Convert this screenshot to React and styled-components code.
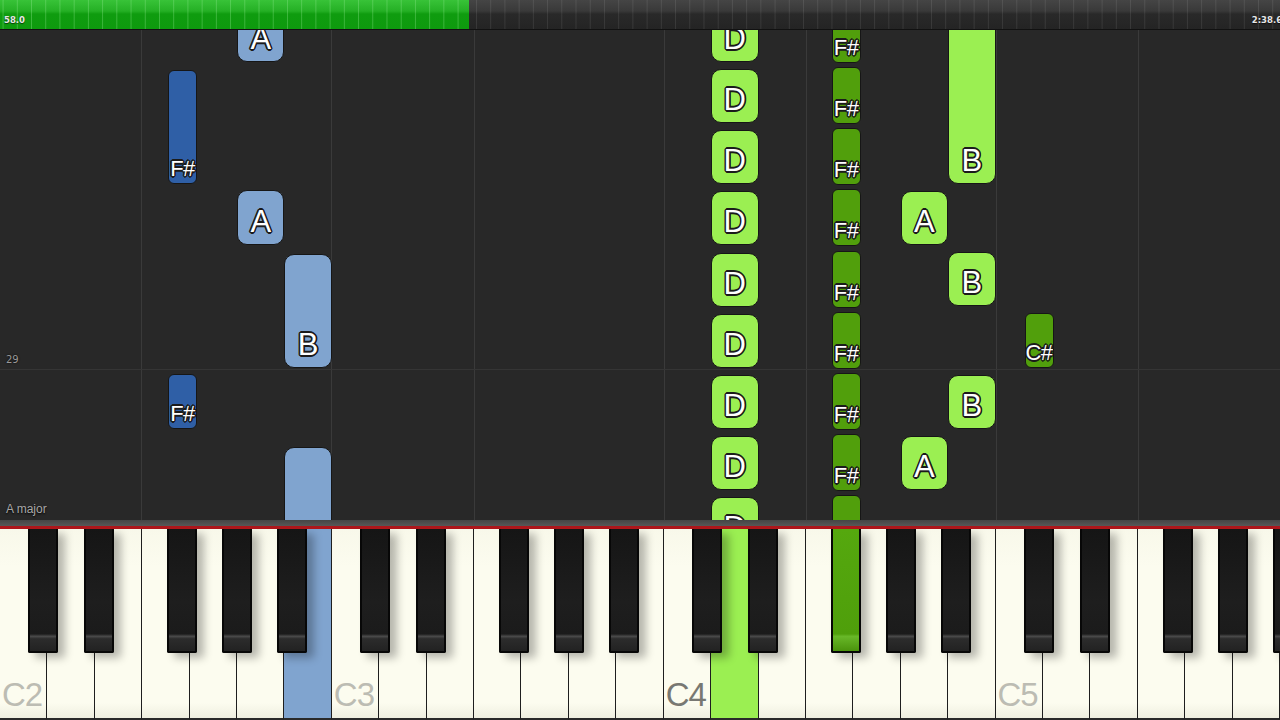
import React from 'react';
import styled, { createGlobalStyle } from 'styled-components';

const WHITE_W = 1280 / 27;
const OCTAVE_W = WHITE_W * 7;
const ROLL_TOP = 30;

const colors = {
  rollBg: '#282828',
  grid: '#3a3a3a',
  lightBlue: '#80a4cf',
  darkBlue: '#2f5fa6',
  lightGreen: '#9bef52',
  darkGreen: '#519f0c',
  ivory: '#fcfcef',
};

// offsets of the black keys inside one octave, measured from the C
const BLACK_OFFSETS = { 'C#': 28, 'D#': 84, 'F#': 167, 'G#': 222, 'A#': 277 };

const whiteLane = (idx) => ({ left: idx * WHITE_W, width: WHITE_W });
const blackLane = (octave, name) => ({ left: octave * OCTAVE_W + BLACK_OFFSETS[name] + 1, width: 29 });

const notes = [
  { lane: whiteLane(5), top: 8, bottom: 62, label: 'A', color: colors.lightBlue },
  { lane: whiteLane(5), top: 190, bottom: 245, label: 'A', color: colors.lightBlue },
  { lane: whiteLane(6), top: 254, bottom: 368, label: 'B', color: colors.lightBlue },
  { lane: whiteLane(6), top: 447, bottom: 760, label: '', color: colors.lightBlue },
  { lane: blackLane(0, 'F#'), top: 70, bottom: 184, label: 'F#', color: colors.darkBlue, small: true },
  { lane: blackLane(0, 'F#'), top: 374, bottom: 429, label: 'F#', color: colors.darkBlue, small: true },
  { lane: whiteLane(20), top: -40, bottom: 184, label: 'B', color: colors.lightGreen },
  { lane: whiteLane(20), top: 252, bottom: 306, label: 'B', color: colors.lightGreen },
  { lane: whiteLane(20), top: 375, bottom: 429, label: 'B', color: colors.lightGreen },
  { lane: whiteLane(19), top: 191, bottom: 245, label: 'A', color: colors.lightGreen },
  { lane: whiteLane(19), top: 436, bottom: 490, label: 'A', color: colors.lightGreen },
  { lane: blackLane(3, 'C#'), top: 313, bottom: 368, label: 'C#', color: colors.darkGreen, small: true },
];

for (let k = -1; k <= 7; k += 1) {
  const d = 69 + k * 61.2;
  notes.push({ lane: whiteLane(15), top: d, bottom: d + 54, label: 'D', color: colors.lightGreen });
  const f = 67 + k * 61.2;
  notes.push({ lane: blackLane(2, 'F#'), top: f, bottom: f + 57, label: 'F#', color: colors.darkGreen, small: true });
}

const gridColumns = [141, 331, 474, 664, 806, 996, 1138];

const whiteKeys = Array.from({ length: 27 }, (_, i) => {
  const octave = Math.floor(i / 7);
  return {
    label: i % 7 === 0 ? `C${octave + 2}` : null,
    strong: octave === 2,
    highlight: i === 6 ? colors.lightBlue : i === 15 ? colors.lightGreen : null,
  };
});

const blackKeys = [];
for (let o = 0; o < 4; o += 1) {
  Object.keys(BLACK_OFFSETS).forEach((name) => {
    blackKeys.push({
      left: o * OCTAVE_W + BLACK_OFFSETS[name],
      highlight: o === 2 && name === 'F#',
    });
  });
}

const GlobalStyle = createGlobalStyle`
  html, body {
    margin: 0;
    padding: 0;
    background: #1a1a1a;
  }
  body {
    font-family: "Liberation Sans", Arial, sans-serif;
    overflow: hidden;
  }
`;

const Screen = styled.div`
  width: 1280px;
  height: 720px;
  display: flex;
  flex-direction: column;
  overflow: hidden;
  background: ${colors.rollBg};
`;

const TopBar = styled.div`
  height: 29px;
  display: flex;
  border-bottom: 1px solid #111;
  flex-shrink: 0;
`;

const Ticks = styled.div`
  display: flex;
  align-items: flex-end;
  padding: 0 4px 4px;
  box-sizing: border-box;
  overflow: hidden;
  white-space: nowrap;
  font-family: "DejaVu Sans", sans-serif;
  font-size: 8.5px;
  font-weight: bold;
  color: #e6e6e6;
  text-shadow: 0 1px 1px rgba(0, 0, 0, 0.6);
  background-image:
    linear-gradient(90deg, ${({ tick }) => tick} 0 1px, transparent 1px 100%),
    ${({ fill }) => fill};
  background-size: 14.22px 100%, 100% 100%;
  background-repeat: repeat-x, no-repeat;
  background-position: 2.6px 0, 0 0;
`;

const Played = styled(Ticks)`
  width: 469px;
`;

const Remaining = styled(Ticks)`
  flex: 1;
  justify-content: flex-end;
  padding-right: 0;
  margin-right: -8px;
  background-position: 7px 0, 0 0;
`;

const Roll = styled.div`
  position: relative;
  height: 490px;
  flex-shrink: 0;
  overflow: hidden;
  background: ${colors.rollBg};
`;

const GridColumn = styled.div`
  position: absolute;
  top: 0;
  bottom: 0;
  width: 1px;
  background: ${colors.grid};
`;

const GridRow = styled.div`
  position: absolute;
  left: 0;
  right: 0;
  height: 1px;
  background: #353535;
`;

const MeasureNumber = styled.div`
  position: absolute;
  left: 6px;
  font-family: "DejaVu Sans", sans-serif;
  font-size: 10px;
  color: #9a9a9a;
  text-shadow: 0 0 2px #000;
`;

const KeyName = styled.div`
  position: absolute;
  left: 6px;
  bottom: 4px;
  font-size: 12px;
  color: #a8a8a8;
  text-shadow: 0 1px 2px #000;
`;

const outline = '#1b1b1b';

const Note = styled.div`
  position: absolute;
  box-sizing: border-box;
  display: flex;
  flex-direction: column;
  justify-content: flex-end;
  align-items: center;
  background: ${({ color }) => color};
  border: 1.5px solid #161616;
  border-radius: ${({ small }) => (small ? '6px' : '10px')};
  padding-bottom: ${({ small }) => (small ? '3px' : '7px')};
  font-size: ${({ small }) => (small ? '22px' : '31px')};
  letter-spacing: ${({ small }) => (small ? '-0.5px' : '0')};
  line-height: 1;
  color: #fff;
  text-shadow:
    -1.2px -1.2px 0 ${outline}, 1.2px -1.2px 0 ${outline}, -1.2px 1.2px 0 ${outline}, 1.2px 1.2px 0 ${outline},
    0 -1.6px 0 ${outline}, 0 1.6px 0 ${outline}, -1.6px 0 0 ${outline}, 1.6px 0 0 ${outline};
  overflow: hidden;
`;

const Divider = styled.div`
  height: 6px;
  flex-shrink: 0;
  background: linear-gradient(#454545, #575757);
  border-bottom: 3px solid #ad161b;
`;

const Keyboard = styled.div`
  position: relative;
  flex: 1;
  display: flex;
  overflow: hidden;
  background: #1a1a1a;
`;

const WhiteKey = styled.div`
  flex: 0 0 ${WHITE_W}px;
  box-sizing: border-box;
  display: flex;
  align-items: flex-end;
  padding: 0 0 7px 2px;
  border-right: 1.5px solid #1e1e1e;
  border-bottom: 2px solid #2a2a2a;
  background: ${({ highlight }) =>
    highlight || `linear-gradient(180deg, #f8f8ea 0%, ${colors.ivory} 20%, ${colors.ivory} 92%, #efefe0 100%)`};
`;

const KeyLabel = styled.span`
  font-size: 33px;
  line-height: 1;
  letter-spacing: -1px;
  color: ${({ strong }) => (strong ? '#787872' : '#bcbcb3')};
`;

const BlackKey = styled.div`
  position: absolute;
  top: 0;
  width: 30px;
  height: 124px;
  box-sizing: border-box;
  border: 2px solid #070707;
  border-top: none;
  border-radius: 0 0 2px 2px;
  background: ${({ highlight }) =>
    highlight
      ? `linear-gradient(180deg, #55a80e 0%, #4f9f0b 86%, #68b828 88%, #4a930c 100%)`
      : `linear-gradient(180deg, #151515 0%, #1e1e1e 60%, #1b1b1b 86%, #4a4a4a 88%, #2c2c2c 90%, #222 100%)`};
  box-shadow: 7px 5px 8px rgba(0, 0, 0, 0.28);
`;

export default function App() {
  return (
    <>
      <GlobalStyle />
      <Screen>
        <TopBar>
          <Played
            fill="linear-gradient(180deg, #38c338 0%, #25b025 11px, #0f9c0f 14px, #0e9a0e 100%)"
            tick="rgba(150, 235, 150, 0.35)"
          >
            58.0
          </Played>
          <Remaining
            fill="linear-gradient(180deg, #454545 0%, #393939 11px, #292929 14px, #242424 100%)"
            tick="rgba(255, 255, 255, 0.09)"
          >
            2:38.63
          </Remaining>
        </TopBar>

        <Roll>
          {gridColumns.map((x) => (
            <GridColumn key={x} style={{ left: x }} />
          ))}
          <GridRow style={{ top: 339 }} />
          <MeasureNumber style={{ top: 324 }}>29</MeasureNumber>
          {notes.map((n, i) => (
            <Note
              key={i}
              color={n.color}
              small={n.small}
              style={{
                left: n.lane.left,
                width: n.lane.width,
                top: n.top - ROLL_TOP,
                height: n.bottom - n.top,
              }}
            >
              {n.label}
            </Note>
          ))}
          <KeyName>A major</KeyName>
        </Roll>

        <Divider />

        <Keyboard>
          {whiteKeys.map((k, i) => (
            <WhiteKey key={i} highlight={k.highlight}>
              {k.label && <KeyLabel strong={k.strong}>{k.label}</KeyLabel>}
            </WhiteKey>
          ))}
          {blackKeys.map((k, i) => (
            <BlackKey key={i} highlight={k.highlight} style={{ left: k.left }} />
          ))}
        </Keyboard>
      </Screen>
    </>
  );
}
